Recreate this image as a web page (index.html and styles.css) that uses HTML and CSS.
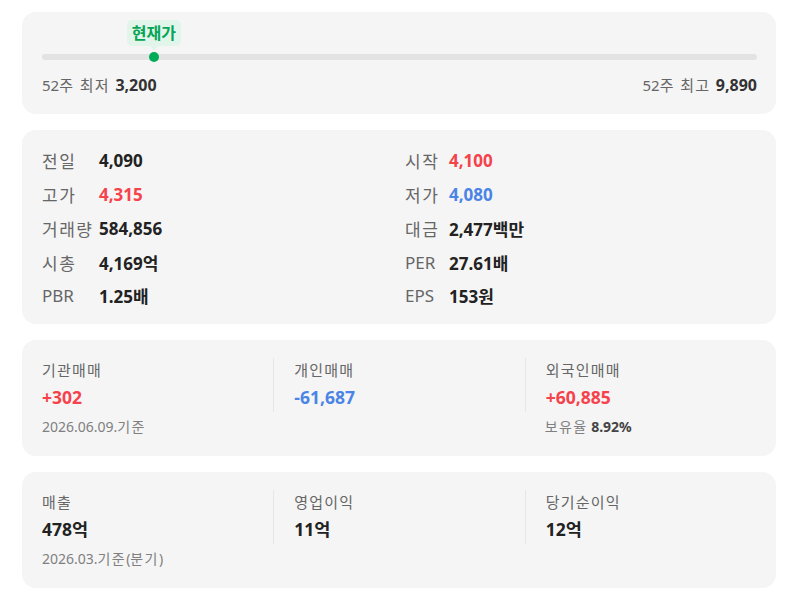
FILE: index.html
```html
<!DOCTYPE html>
<html lang="ko">
<head>
<meta charset="utf-8">
<link rel="stylesheet" href="styles.css">
</head>
<body>
<div class="page">
  <section class="card range">
    <div class="track-wrap">
      <div class="track"></div>
      <div class="marker" style="left: 15.65%">
        <span class="tip">현재가</span>
        <span class="dot"></span>
      </div>
    </div>
    <div class="range-labels">
      <span class="lbl">52<span class="ko">주 최저 </span><b>3,200</b></span>
      <span class="lbl">52<span class="ko">주 최고 </span><b>9,890</b></span>
    </div>
  </section>

  <section class="card quotes">
    <dl class="qcol">
      <dt>전일</dt><dd>4,090</dd>
      <dt>고가</dt><dd class="up">4,315</dd>
      <dt>거래량</dt><dd>584,856</dd>
      <dt>시총</dt><dd>4,169억</dd>
      <dt class="en">PBR</dt><dd>1.25배</dd>
    </dl>
    <dl class="qcol right">
      <dt>시작</dt><dd class="up">4,100</dd>
      <dt>저가</dt><dd class="down">4,080</dd>
      <dt>대금</dt><dd>2,477백만</dd>
      <dt class="en">PER</dt><dd>27.61배</dd>
      <dt class="en">EPS</dt><dd>153원</dd>
    </dl>
  </section>

  <section class="card trio">
    <div class="cell">
      <div class="block"><div class="t">기관매매</div><div class="v up">+302</div></div>
      <div class="note">2026.06.09.<span class="ko">기준</span></div>
    </div>
    <div class="cell">
      <div class="block sep"><div class="t">개인매매</div><div class="v down">-61,687</div></div>
    </div>
    <div class="cell">
      <div class="block sep"><div class="t">외국인매매</div><div class="v up">+60,885</div></div>
      <div class="note"><span class="ko">보유율</span> <b>8.92%</b></div>
    </div>
  </section>

  <section class="card trio">
    <div class="cell">
      <div class="block"><div class="t">매출</div><div class="v">478억</div></div>
      <div class="note">2026.03.<span class="ko">기준</span>(<span class="ko">분기</span>)</div>
    </div>
    <div class="cell">
      <div class="block sep"><div class="t">영업이익</div><div class="v">11억</div></div>
    </div>
    <div class="cell">
      <div class="block sep"><div class="t">당기순이익</div><div class="v">12억</div></div>
    </div>
  </section>
</div>
</body>
</html>
```

FILE: styles.css
```css
html, body {
  margin: 0;
  padding: 0;
  background: #ffffff;
}
body {
  font-family: "Noto Sans", "Noto Sans CJK KR", sans-serif;
  color: #222;
}
.page {
  width: 754px;
  margin: 12px 0 0 22px;
  display: flex;
  flex-direction: column;
  gap: 16px;
}
.card {
  background: #f5f5f5;
  border-radius: 14px;
}

/* range card */
.range {
  height: 102px;
  box-sizing: border-box;
  padding: 0 19px 0 20px;
}
.track-wrap {
  position: relative;
  height: 52px;
}
.track {
  position: absolute;
  left: 0;
  right: 0;
  top: 42px;
  height: 6px;
  border-radius: 3px;
  background: #e3e3e3;
}
.marker {
  position: absolute;
  top: 0;
  width: 0;
}
.tip {
  position: absolute;
  top: 8px;
  left: -27px;
  width: 54px;
  height: 26px;
  line-height: 26px;
  text-align: center;
  border-radius: 5px;
  background: #e2f5eb;
  color: #07a456;
  font-weight: 700;
  font-size: 16px;
}
.tip::after {
  content: "";
  position: absolute;
  left: 50%;
  bottom: -4px;
  margin-left: -4px;
  border-left: 4px solid transparent;
  border-right: 4px solid transparent;
  border-top: 4px solid #e2f5eb;
}
.dot {
  position: absolute;
  top: 40px;
  left: -5px;
  width: 10px;
  height: 10px;
  border-radius: 50%;
  background: #00ac55;
}
.range-labels {
  display: flex;
  justify-content: space-between;
  margin-top: 10px;
  font-size: 15px;
  line-height: 22px;
}
.lbl {
  color: #666;
}
.lbl .ko {
  letter-spacing: 1.4px;
}
.lbl b {
  color: #333;
  font-weight: 700;
  font-size: 16px;
}

/* quotes card */
.quotes {
  display: grid;
  grid-template-columns: 1fr 1fr;
  column-gap: 12px;
  padding: 14px 20px 11px;
}
.qcol {
  margin: 0;
  display: grid;
  grid-template-columns: 57px 1fr;
  grid-auto-rows: 33.75px;
  align-items: center;
  font-size: 17px;
}
.qcol.right {
  grid-template-columns: 44px 1fr;
}
.qcol dt {
  color: #666;
  letter-spacing: 1.5px;
  white-space: nowrap;
}
.qcol dt.en {
  letter-spacing: 0;
}
.qcol dd {
  margin: 0;
  font-weight: 700;
  color: #222;
}
.up { color: #f5424b !important; }
.down { color: #4a84e6 !important; }

/* trio cards */
.trio {
  display: grid;
  grid-template-columns: 1fr 1fr 1fr;
  height: 116px;
  box-sizing: border-box;
  padding-top: 18px;
}
.cell {
  display: flex;
  flex-direction: column;
}
.block {
  padding-left: 20px;
}
.block.sep {
  border-left: 1px solid #e6e6e6;
}
.t {
  font-size: 15px;
  line-height: 24px;
  color: #666;
  letter-spacing: 1.2px;
}
.v {
  font-size: 17.5px;
  font-weight: 700;
  line-height: 30px;
  color: #222;
}
.note {
  padding-left: 20px;
  margin-top: 5px;
  font-size: 14px;
  line-height: 20px;
  color: #808080;
}
.note .ko {
  letter-spacing: 1.4px;
}
.note b {
  color: #444;
  font-weight: 700;
}
```
